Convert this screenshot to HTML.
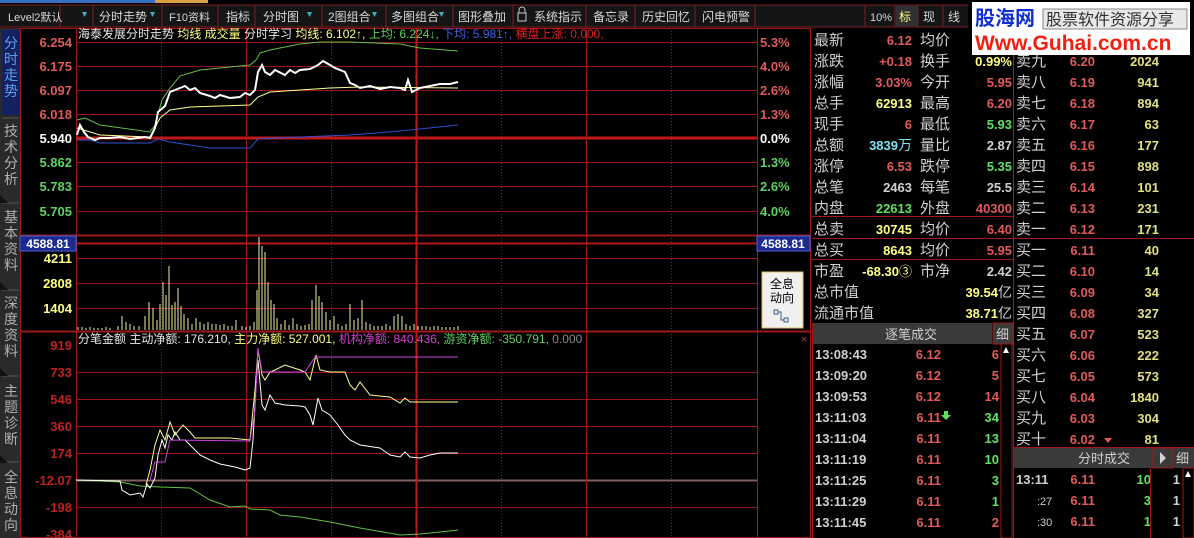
<!DOCTYPE html>
<html><head><meta charset="utf-8"><style>
html,body{margin:0;padding:0;background:#000;width:1194px;height:538px;overflow:hidden}
svg{display:block}
text{font-family:"Liberation Sans","Noto Sans CJK SC",sans-serif}
</style></head><body>
<svg width="1194" height="538" viewBox="0 0 1194 538" xmlns="http://www.w3.org/2000/svg">
<rect width="1194" height="538" fill="#000"/>
<rect x="0" y="0" width="155" height="3" fill="#3a6fc0"/>
<rect x="155" y="0" width="53" height="3" fill="#d8a040"/>
<rect x="0" y="5" width="968" height="22" fill="#151515"/>
<line x1="0" y1="27" x2="968" y2="27" stroke="#802020"/>
<line x1="0" y1="5" x2="968" y2="5" stroke="#802020"/>
<g stroke="#802020">
<line x1="60" y1="5" x2="60" y2="27"/><line x1="93" y1="5" x2="93" y2="27"/><line x1="162" y1="5" x2="162" y2="27"/><line x1="218" y1="5" x2="218" y2="27"/><line x1="255" y1="5" x2="255" y2="27"/><line x1="322" y1="5" x2="322" y2="27"/><line x1="386" y1="5" x2="386" y2="27"/><line x1="453" y1="5" x2="453" y2="27"/><line x1="513" y1="5" x2="513" y2="27"/><line x1="586" y1="5" x2="586" y2="27"/><line x1="635" y1="5" x2="635" y2="27"/><line x1="695" y1="5" x2="695" y2="27"/><line x1="755" y1="5" x2="755" y2="27"/>
<line x1="865" y1="5" x2="865" y2="27"/><line x1="895" y1="5" x2="895" y2="27"/><line x1="918" y1="5" x2="918" y2="27"/><line x1="943" y1="5" x2="943" y2="27"/>
</g>
<g font-size="12" fill="#d8d8d8">
<text x="8" y="21" font-size="11">Level2默认</text>
<text x="99" y="21">分时走势</text>
<text x="169" y="21" font-size="11">F10资料</text>
<text x="226" y="21">指标</text>
<text x="263" y="21">分时图</text>
<text x="328" y="21">2图组合</text>
<text x="391" y="21">多图组合</text>
<text x="458" y="21">图形叠加</text>
<text x="534" y="21">系统指示</text>
<text x="593" y="21">备忘录</text>
<text x="642" y="21">历史回忆</text>
<text x="702" y="21">闪电预警</text>
<text x="870" y="21" font-size="11">10%</text>
<text x="923" y="21">现</text>
<text x="948" y="21">线</text>
</g>
<rect x="896" y="6" width="22" height="20" fill="#303030"/>
<text x="899" y="21" font-size="12" fill="#ffff80">标</text>
<g fill="#40b0c0">
<path d="M82 12h5l-2.5 5z"/><path d="M150 12h5l-2.5 5z"/><path d="M307 12h5l-2.5 5z"/><path d="M372 12h5l-2.5 5z"/><path d="M439 12h5l-2.5 5z"/>
</g>
<rect x="518" y="13" width="8" height="8" fill="none" stroke="#ccc"/><path d="M519 13v-3a3 3 0 0 1 6 0v3" fill="none" stroke="#ccc"/>

<rect x="0" y="28" width="20" height="510" fill="#2a2a2a"/>
<rect x="2" y="30" width="17" height="85" fill="#142060"/>
<g stroke="#555" fill="none"><path d="M2 118h17M2 203h17M2 290h17M2 376h17M2 462h17"/></g>
<g fill="#111"><path d="M0 195l8 8-8 0z"/><path d="M0 282l8 8-8 0z"/><path d="M0 368l8 8-8 0z"/><path d="M0 455l8 8-8 0z"/></g>
<g font-size="14" fill="#b0b0b0" text-anchor="middle">
<text x="11" y="48" fill="#5aa0f0">分</text><text x="11" y="64" fill="#5aa0f0">时</text><text x="11" y="80" fill="#5aa0f0">走</text><text x="11" y="96" fill="#5aa0f0">势</text>
<text x="11" y="136">技</text><text x="11" y="152">术</text><text x="11" y="168">分</text><text x="11" y="184">析</text>
<text x="11" y="222">基</text><text x="11" y="238">本</text><text x="11" y="254">资</text><text x="11" y="270">料</text>
<text x="11" y="308">深</text><text x="11" y="324">度</text><text x="11" y="340">资</text><text x="11" y="356">料</text>
<text x="11" y="396">主</text><text x="11" y="412">题</text><text x="11" y="428">诊</text><text x="11" y="444">断</text>
<text x="11" y="482">全</text><text x="11" y="498">息</text><text x="11" y="514">动</text><text x="11" y="530">向</text>
</g>

<g stroke="#a01818" fill="none">
<rect x="20.5" y="28.5" width="790" height="509"/>
<line x1="76.5" y1="28" x2="76.5" y2="538"/>
<line x1="757.5" y1="28" x2="757.5" y2="538"/>
<line x1="20" y1="235.5" x2="811" y2="235.5" stroke-width="2"/>
<line x1="20" y1="331.5" x2="811" y2="331.5" stroke-width="2"/>
</g>
<g stroke="#9a1515" stroke-width="1">
<line x1="76" y1="42.5" x2="757" y2="42.5"/><line x1="76" y1="66.5" x2="757" y2="66.5"/><line x1="76" y1="90.5" x2="757" y2="90.5"/><line x1="76" y1="114.5" x2="757" y2="114.5"/>
<line x1="76" y1="162.5" x2="757" y2="162.5"/><line x1="76" y1="186.5" x2="757" y2="186.5"/><line x1="76" y1="211.5" x2="757" y2="211.5"/>
<line x1="76" y1="258.5" x2="757" y2="258.5"/><line x1="76" y1="283.5" x2="757" y2="283.5"/><line x1="76" y1="308.5" x2="757" y2="308.5"/>
<line x1="76" y1="372.5" x2="757" y2="372.5"/><line x1="76" y1="399.5" x2="757" y2="399.5"/><line x1="76" y1="426.5" x2="757" y2="426.5"/><line x1="76" y1="453.5" x2="757" y2="453.5"/><line x1="76" y1="507.5" x2="757" y2="507.5"/>
</g>
<line x1="76" y1="243.5" x2="757" y2="243.5" stroke="#b01818" stroke-width="2"/>
<line x1="76" y1="480.5" x2="757" y2="480.5" stroke="#806060" stroke-width="2"/>
<line x1="76" y1="138" x2="757" y2="138" stroke="#c01818" stroke-width="3"/>
<g stroke="#9a1515" stroke-dasharray="1 2">
<line x1="161.5" y1="28" x2="161.5" y2="538"/><line x1="331.5" y1="28" x2="331.5" y2="538"/><line x1="501.5" y1="28" x2="501.5" y2="538"/><line x1="671.5" y1="28" x2="671.5" y2="538"/>
</g>
<g stroke="#a01818">
<line x1="246.5" y1="28" x2="246.5" y2="538"/><line x1="586.5" y1="28" x2="586.5" y2="538"/>
</g>
<line x1="416.5" y1="28" x2="416.5" y2="538" stroke="#c01818" stroke-width="2"/>

<g font-size="13" font-weight="bold" text-anchor="end">
<text x="72" y="47" fill="#e05a5a">6.254</text><text x="72" y="71" fill="#e05a5a">6.175</text><text x="72" y="95" fill="#e05a5a">6.097</text><text x="72" y="119" fill="#e05a5a">6.018</text>
<text x="72" y="143" fill="#ffffff">5.940</text>
<text x="72" y="167" fill="#60d060">5.862</text><text x="72" y="191" fill="#60d060">5.783</text><text x="72" y="216" fill="#60d060">5.705</text>
<text x="72" y="263" fill="#ffff80">4211</text><text x="72" y="288" fill="#ffff80">2808</text><text x="72" y="313" fill="#ffff80">1404</text>
<text x="72" y="350" fill="#c02020">919</text><text x="72" y="377" fill="#c02020">733</text><text x="72" y="404" fill="#c02020">546</text><text x="72" y="431" fill="#c02020">360</text><text x="72" y="458" fill="#c02020">174</text><text x="72" y="485" fill="#c02020">-12.07</text><text x="72" y="512" fill="#c02020">-198</text><text x="72" y="539" fill="#c02020">-384</text>
</g>
<g font-size="13" font-weight="bold">
<text x="760" y="47" fill="#e05a5a">5.3%</text><text x="760" y="71" fill="#e05a5a">4.0%</text><text x="760" y="95" fill="#e05a5a">2.6%</text><text x="760" y="119" fill="#e05a5a">1.3%</text>
<text x="760" y="143" fill="#fff">0.0%</text>
<text x="760" y="167" fill="#60d060">1.3%</text><text x="760" y="191" fill="#60d060">2.6%</text><text x="760" y="216" fill="#60d060">4.0%</text>
</g>
<rect x="20" y="236" width="56" height="15" fill="#1a2a90" stroke="#5060d0"/>
<text x="48" y="248" font-size="12" font-weight="bold" fill="#fff" text-anchor="middle">4588.81</text>
<rect x="757" y="236" width="53" height="15" fill="#1a2a90" stroke="#5060d0"/>
<text x="783" y="248" font-size="12" font-weight="bold" fill="#fff" text-anchor="middle">4588.81</text>

<g font-size="12">
<text x="78" y="38" fill="#e8e8e8">海泰发展分时走势 <tspan fill="#ffff80">均线 成交量</tspan> 分时学习 <tspan fill="#ffff80">均线: 6.102↑,</tspan> <tspan fill="#60d060">上均: 6.224↓,</tspan> <tspan fill="#4060e0">下均: 5.981↑,</tspan> <tspan fill="#e02020">横盘上涨: 0.000,</tspan></text>
<text x="78" y="343" fill="#e8e8e8">分笔金额 主动净额: 176.210, <tspan fill="#ffff80">主力净额: 527.001,</tspan> <tspan fill="#d040d0">机构净额: 840.436,</tspan> <tspan fill="#60d060">游资净额: -350.791,</tspan> <tspan fill="#888">0.000</tspan></text>
</g>

<polyline fill="none" stroke="#60c040" stroke-width="1" points="77,120 85,118 100,125 150,132 155,125 162,100 170,88 180,76 200,70 250,65 256,60 260,53 270,50 300,44 320,42 350,42 400,44 420,48 458,51"/>
<polyline fill="none" stroke="#3050d0" stroke-width="1" points="77,140 90,140 100,143 150,143 158,139 170,142 190,145 210,148 250,148 258,139 300,137 350,135 400,131 458,125"/>
<polyline fill="none" stroke="#ffff90" stroke-width="1" points="77,128 100,135 150,137 160,118 170,110 190,107 250,105 258,97 270,92 300,90 330,88 360,87 458,88"/>
<polyline fill="none" stroke="#ffffff" stroke-width="2" points="77,135 80,125 84,132 88,137 95,140 100,138 110,138 120,137 130,139 145,137 150,138 155,128 158,112 165,106 170,92 175,90 180,88 185,86 190,90 195,88 200,93 210,96 215,98 220,95 230,98 240,97 245,93 250,95 255,90 258,72 262,65 265,72 270,75 275,70 285,75 290,70 295,73 300,70 310,69 318,65 323,61 330,65 335,68 340,70 345,72 350,83 355,85 360,88 370,86 380,89 390,87 400,88 405,90 408,80 412,92 420,88 430,86 440,84 450,84 458,82"/>

<g stroke="#f0f0a0" stroke-width="1">
<path d="M78 330v-3M82 330v-3M86 330v-2M90 330v-3M94 330v-2M98 330v-2M102 330v-2M106 330v-3M110 330v-2M118 330v-4M122 330v-14M126 330v-8M130 330v-6M134 330v-4M139 330v-4M145 330v-14M149 330v-28M153 330v-22M157 330v-10M160 330v-26M163 330v-48M166 330v-35M169 330v-64M172 330v-25M175 330v-28M178 330v-42M181 330v-24M184 330v-16M188 330v-12M192 330v-6M196 330v-12M200 330v-8M204 330v-6M208 330v-8M212 330v-6M216 330v-6M220 330v-5M224 330v-6M228 330v-4M232 330v-4M236 330v-10M242 330v-4M246 330v-3M250 330v-4M254 330v-8M257 330v-40M259 330v-93M262 330v-84M265 330v-78M268 330v-48M271 330v-30M274 330v-26M277 330v-12M281 330v-6M285 330v-10M289 330v-5M293 330v-12M297 330v-6M301 330v-4M305 330v-5M309 330v-6M312 330v-30M316 330v-45M319 330v-34M322 330v-28M326 330v-18M330 330v-10M334 330v-14M338 330v-6M342 330v-4M346 330v-6M350 330v-26M354 330v-10M358 330v-12M362 330v-30M366 330v-8M370 330v-6M374 330v-4M378 330v-4M382 330v-4M386 330v-6M390 330v-4M394 330v-14M398 330v-16M402 330v-14M406 330v-6M410 330v-4M414 330v-6M418 330v-4M422 330v-4M426 330v-4M430 330v-3M434 330v-4M438 330v-4M442 330v-3M446 330v-3M450 330v-3M454 330v-3M458 330v-4"/>
</g>

<polyline fill="none" stroke="#60c040" points="76,480 120,482 140,486 160,487 190,488 210,500 230,507 245,506 250,509 270,510 280,515 300,517 330,522 360,528 400,535 420,534 440,532 458,530"/>
<polyline fill="none" stroke="#ffffff" points="76,480 120,481 122,490 130,495 140,493 143,497 147,484 150,488 155,478 158,455 162,440 165,448 168,435 172,440 175,432 180,440 185,440 190,445 200,455 210,460 220,464 235,467 245,470 250,468 253,440 256,385 258,360 262,405 265,410 270,395 275,403 285,405 300,406 305,407 310,415 313,425 318,398 322,410 330,415 338,425 345,435 350,440 360,445 380,448 390,455 400,457 405,452 410,457 420,458 430,455 440,453 458,453"/>
<polyline fill="none" stroke="#ffff90" points="146,485 150,470 155,445 160,430 165,440 170,422 175,435 183,425 190,432 195,438 230,438 250,440 255,390 258,350 262,375 265,380 270,372 275,370 285,365 300,370 305,372 310,380 316,355 320,370 330,372 345,372 350,385 355,390 360,382 370,395 390,397 400,403 405,398 410,402 458,402"/>
<polyline fill="none" stroke="#d040e0" points="150,480 155,462 165,462 170,440 250,441 255,410 258,348 262,372 305,372 315,357 458,357"/>

<rect x="762" y="272" width="41" height="56" fill="#f0f0f0" stroke="#e0c060"/>
<text x="782" y="288" font-size="12" fill="#000" text-anchor="middle">全息</text>
<text x="782" y="302" font-size="12" fill="#000" text-anchor="middle">动向</text>
<path d="M774 310h4v4h-4zM784 318h4v4h-4zM778 312h3v8h3" fill="none" stroke="#406080"/>
<text x="801" y="343" font-size="11" fill="#a04040">×</text>

<line x1="1013.5" y1="28" x2="1013.5" y2="448" stroke="#a01818"/>
<line x1="812" y1="216.5" x2="1013" y2="216.5" stroke="#a01818"/>
<line x1="812" y1="238.5" x2="1194" y2="238.5" stroke="#a01818"/>
<line x1="812" y1="259.5" x2="1013" y2="259.5" stroke="#a01818"/>
<g font-size="15" fill="#d0d0d0">
<text x="814" y="45">最新</text><text x="814" y="66">涨跌</text><text x="814" y="87">涨幅</text><text x="814" y="108">总手</text><text x="814" y="129">现手</text><text x="814" y="150">总额</text><text x="814" y="171">涨停</text><text x="814" y="192">总笔</text><text x="814" y="213">内盘</text><text x="814" y="234">总卖</text><text x="814" y="255">总买</text><text x="814" y="276">市盈</text><text x="814" y="297">总市值</text><text x="814" y="318">流通市值</text>
<text x="920" y="45">均价</text><text x="920" y="66">换手</text><text x="920" y="87">今开</text><text x="920" y="108">最高</text><text x="920" y="129">最低</text><text x="920" y="150">量比</text><text x="920" y="171">跌停</text><text x="920" y="192">每笔</text><text x="920" y="213">外盘</text><text x="920" y="234">均价</text><text x="920" y="255">均价</text><text x="920" y="276">市净</text>
<text x="1016" y="45">卖十</text><text x="1016" y="66">卖九</text><text x="1016" y="87">卖八</text><text x="1016" y="108">卖七</text><text x="1016" y="129">卖六</text><text x="1016" y="150">卖五</text><text x="1016" y="171">卖四</text><text x="1016" y="192">卖三</text><text x="1016" y="213">卖二</text><text x="1016" y="234">卖一</text>
<text x="1016" y="255">买一</text><text x="1016" y="276">买二</text><text x="1016" y="297">买三</text><text x="1016" y="318">买四</text><text x="1016" y="339">买五</text><text x="1016" y="360">买六</text><text x="1016" y="381">买七</text><text x="1016" y="402">买八</text><text x="1016" y="423">买九</text><text x="1016" y="444">买十</text>
</g>
<g font-size="13" font-weight="bold" text-anchor="end">
<text x="912" y="45" fill="#e05a5a">6.12</text><text x="912" y="66" fill="#e05a5a">+0.18</text><text x="912" y="87" fill="#e05a5a">3.03%</text><text x="912" y="108" fill="#ffff80">62913</text><text x="912" y="129" fill="#e05a5a">6</text><text x="912" y="150" fill="#80e0f0">3839<tspan font-weight="normal" font-size="14">万</tspan></text><text x="912" y="171" fill="#e05a5a">6.53</text><text x="912" y="192" fill="#d0d0d0">2463</text><text x="912" y="213" fill="#60e060">22613</text><text x="912" y="234" fill="#ffff80">30745</text><text x="912" y="255" fill="#ffff80">8643</text><text x="912" y="276" fill="#ffff80">-68.30<tspan font-weight="normal">③</tspan></text>
<text x="1012" y="66" fill="#ffff80">0.99%</text><text x="1012" y="87" fill="#e05a5a">5.95</text><text x="1012" y="108" fill="#e05a5a">6.20</text><text x="1012" y="129" fill="#60e060">5.93</text><text x="1012" y="150" fill="#d0d0d0">2.87</text><text x="1012" y="171" fill="#60e060">5.35</text><text x="1012" y="192" fill="#d0d0d0">25.5</text><text x="1012" y="213" fill="#e05a5a">40300</text><text x="1012" y="234" fill="#e05a5a">6.40</text><text x="1012" y="255" fill="#e05a5a">5.95</text><text x="1012" y="276" fill="#d0d0d0">2.42</text><text x="1012" y="297" fill="#ffff80">39.54<tspan font-weight="normal" font-size="14" fill="#d0d0d0">亿</tspan></text><text x="1012" y="318" fill="#ffff80">38.71<tspan font-weight="normal" font-size="14" fill="#d0d0d0">亿</tspan></text>
</g>
<g font-size="13" font-weight="bold" text-anchor="end" fill="#e05a5a">
<text x="1095" y="66">6.20</text><text x="1095" y="87">6.19</text><text x="1095" y="108">6.18</text><text x="1095" y="129">6.17</text><text x="1095" y="150">6.16</text><text x="1095" y="171">6.15</text><text x="1095" y="192">6.14</text><text x="1095" y="213">6.13</text><text x="1095" y="234">6.12</text><text x="1095" y="255">6.11</text><text x="1095" y="276">6.10</text><text x="1095" y="297">6.09</text><text x="1095" y="318">6.08</text><text x="1095" y="339">6.07</text><text x="1095" y="360">6.06</text><text x="1095" y="381">6.05</text><text x="1095" y="402">6.04</text><text x="1095" y="423">6.03</text><text x="1095" y="444">6.02</text>
</g>
<path d="M1104 438h8l-4 5z" fill="#e05a5a"/>
<g font-size="13" font-weight="bold" text-anchor="end" fill="#e0e080">
<text x="1159" y="66">2024</text><text x="1159" y="87">941</text><text x="1159" y="108">894</text><text x="1159" y="129">63</text><text x="1159" y="150">177</text><text x="1159" y="171">898</text><text x="1159" y="192">101</text><text x="1159" y="213">231</text><text x="1159" y="234">171</text><text x="1159" y="255">40</text><text x="1159" y="276">14</text><text x="1159" y="297">34</text><text x="1159" y="318">327</text><text x="1159" y="339">523</text><text x="1159" y="360">222</text><text x="1159" y="381">573</text><text x="1159" y="402">1840</text><text x="1159" y="423">304</text><text x="1159" y="444">81</text>
</g>

<rect x="972" y="2" width="218" height="53" fill="#fff"/>
<text x="975" y="25" font-size="20" font-weight="bold" fill="#1030d0">股海网</text>
<rect x="1043" y="9" width="144" height="20" fill="#e8e8e8" stroke="#888"/>
<text x="1046" y="25" font-size="16" fill="#303030" font-family="Noto Serif CJK SC,serif">股票软件资源分享</text>
<text x="975" y="50" font-size="21" font-weight="bold" fill="#f02010">Www.Guhai.com.cn</text>

<rect x="812" y="323" width="180" height="21" fill="#3a3a3a"/>
<rect x="993" y="323" width="20" height="21" fill="#3a3a3a" stroke="#a01818"/>
<text x="885" y="339" font-size="13" fill="#d0d0d0">逐笔成交</text>
<text x="996" y="339" font-size="13" fill="#d0d0d0">细</text>
<rect x="1001" y="344" width="11" height="194" fill="#000" stroke="#a01818"/>
<path d="M1003 353l3-6 3 6z" fill="#fff"/>
<line x1="812.5" y1="323" x2="812.5" y2="538" stroke="#a01818"/>
<g font-size="13" font-weight="bold" fill="#d0d0d0">
<text x="815" y="359">13:08:43</text><text x="815" y="380">13:09:20</text><text x="815" y="401">13:09:53</text><text x="815" y="422">13:11:03</text><text x="815" y="443">13:11:04</text><text x="815" y="464">13:11:19</text><text x="815" y="485">13:11:25</text><text x="815" y="506">13:11:29</text><text x="815" y="527">13:11:45</text>
</g>
<g font-size="13" font-weight="bold" fill="#e05a5a" text-anchor="end">
<text x="941" y="359">6.12</text><text x="941" y="380">6.12</text><text x="941" y="401">6.12</text><text x="941" y="422">6.11</text><text x="941" y="443">6.11</text><text x="941" y="464">6.11</text><text x="941" y="485">6.11</text><text x="941" y="506">6.11</text><text x="941" y="527">6.11</text>
<text x="999" y="359">6</text><text x="999" y="380">5</text><text x="999" y="401">14</text>
<text x="999" y="527">2</text>
</g>
<g font-size="13" font-weight="bold" fill="#60e060" text-anchor="end">
<text x="999" y="422">34</text><text x="999" y="443">13</text><text x="999" y="464">10</text><text x="999" y="485">3</text><text x="999" y="506">1</text>
</g>
<path d="M944 411h4v4h3l-5 5-5-5h3z" fill="#60e060"/>

<rect x="1013" y="447" width="181" height="21" fill="#3a3a3a"/>
<line x1="1013" y1="447.5" x2="1194" y2="447.5" stroke="#a01818"/>
<text x="1078" y="463" font-size="13" fill="#d0d0d0">分时成交</text>
<rect x="1153" y="448" width="20" height="20" fill="#3a3a3a" stroke="#a01818"/>
<path d="M1160 452l6 6-6 6z" fill="#d0d0d0"/>
<text x="1176" y="463" font-size="13" fill="#d0d0d0">细</text>
<line x1="1013.5" y1="447" x2="1013.5" y2="538" stroke="#a01818"/>
<rect x="1183" y="468" width="11" height="70" fill="#000" stroke="#a01818"/>
<path d="M1185 477l3-6 3 6z" fill="#fff"/>
<g font-size="13" font-weight="bold">
<text x="1016" y="484" fill="#d0d0d0">13:11</text>
<text x="1037" y="505" fill="#d0d0d0" font-weight="normal" font-size="11">:27</text>
<text x="1037" y="526" fill="#d0d0d0" font-weight="normal" font-size="11">:30</text>
<g fill="#e05a5a" text-anchor="end"><text x="1095" y="484">6.11</text><text x="1095" y="505">6.11</text><text x="1095" y="526">6.11</text></g>
<g fill="#60e060" text-anchor="end"><text x="1151" y="484">10</text><text x="1151" y="505">3</text><text x="1151" y="526">1</text></g>
<g fill="#d0d0d0" text-anchor="end"><text x="1180" y="484">1</text><text x="1180" y="505">1</text><text x="1180" y="526">1</text></g>
</g>
<line x1="1150.5" y1="468" x2="1150.5" y2="538" stroke="#a01818"/>
</svg>
</body></html>
